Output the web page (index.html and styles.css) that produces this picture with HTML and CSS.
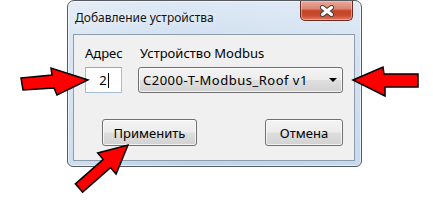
FILE: index.html
```html
<!DOCTYPE html>
<html lang="ru">
<head>
<meta charset="utf-8">
<title>Добавление устройства</title>
<link rel="stylesheet" href="styles.css">
</head>
<body>
<div class="stage">
  <div class="window">
    <div class="titlebar">
      <span class="title">Добавление устройства</span>
      <div class="close" aria-label="Закрыть">
        <svg width="16" height="12" viewBox="0 0 16 12">
          <path d="M3.5 2.5 L12.5 9.5 M12.5 2.5 L3.5 9.5" stroke="#3a3a3a" stroke-width="5" stroke-linecap="round"/>
          <path d="M3.5 2.5 L12.5 9.5 M12.5 2.5 L3.5 9.5" stroke="#ffffff" stroke-width="3.2" stroke-linecap="round"/>
        </svg>
      </div>
    </div>
    <div class="client">
      <div class="fields">
        <div class="label">Адрес</div>
        <div class="label label-combo">Устройство Modbus</div>
        <div class="textbox"><span>2</span><span class="caret"></span></div>
        <div class="combo"><span class="combo-text">C2000-T-Modbus_Roof v1</span><span class="combo-arrow"></span></div>
      </div>
      <div class="actions">
        <div class="btn btn-apply">Применить</div>
        <div class="btn btn-cancel">Отмена</div>
      </div>
    </div>
  </div>
  <svg class="arrows" width="433" height="204" viewBox="0 0 433 204">
    <polygon points="21,78 52,75 51,68 88,80 57,95 54,88 23,90" fill="#ff0000" stroke="#000" stroke-width="1.5" stroke-linejoin="miter"/>
    <polygon points="353,80 383,67 384,74 418,74 418,87 385,87 385,96" fill="#ff0000" stroke="#000" stroke-width="1.5" stroke-linejoin="miter"/>
    <polygon points="128,145 116.1,174.1 110.5,167.6 82.6,192.1 75.4,183.9 103.3,159.4 97.7,153" fill="#ff0000" stroke="#000" stroke-width="1.5" stroke-linejoin="miter"/>
  </svg>
</div>
</body>
</html>
```

FILE: styles.css
```css
* { box-sizing: border-box; }
html, body { margin: 0; padding: 0; background: #ffffff; }
body { font-family: "Noto Sans", "Open Sans", "DejaVu Sans", sans-serif; font-size: 13px; color: #000; }

.stage {
  position: relative;
  width: 433px;
  height: 204px;
  overflow: hidden;
  background: #ffffff;
}

.window {
  margin-left: 67px;
  width: 295px;
  height: 167px;
  border: 1px solid #565a60;
  border-radius: 7px 7px 6px 6px;
  background:
    linear-gradient(90deg, rgba(255,255,255,0.25) 0%, rgba(255,255,255,0) 40%, rgba(255,255,255,0.15) 100%),
    linear-gradient(180deg, #dde8f4 0%, #cfdff0 25%, #c4d8ed 70%, #bcd3ea 100%);
  box-shadow: inset 0 0 0 1px rgba(255,255,255,0.55);
  display: flex;
  flex-direction: column;
}

.titlebar {
  height: 33px;
  display: flex;
  align-items: flex-start;
  justify-content: space-between;
  padding-left: 7px;
}

.title {
  font-size: 12px;
  line-height: 18px;
  margin-top: 8px;
  color: #111;
  text-shadow: 0 0 6px rgba(255,255,255,0.9);
}

.close {
  width: 53px;
  height: 20px;
  margin-right: 8px;
  border: 1px solid #6b2b22;
  border-top: none;
  border-radius: 0 0 5px 5px;
  background: linear-gradient(180deg, #e9a89c 0%, #dc8672 40%, #c44428 52%, #c9492f 75%, #de7a5f 100%);
  box-shadow: inset 0 0 0 1px rgba(255,220,210,0.45);
  display: flex;
  align-items: center;
  justify-content: center;
}

.client {
  margin: 0 6px 0 5px;
  height: 127px;
  border: 1px solid #8f9cab;
  background: #f0f0f0;
  padding: 9px 11px 0 11px;
  display: flex;
  flex-direction: column;
}

.fields {
  display: grid;
  grid-template-columns: 37px 205px;
  grid-template-rows: 18px 26px;
  column-gap: 16px;
  row-gap: 5px;
}

.label { line-height: 18px; white-space: nowrap; }
.label-combo { padding-left: 2px; }

.textbox {
  background: #ffffff;
  border: 1px solid #a7bdd5;
  border-top-color: #8ea8c6;
  display: flex;
  align-items: center;
  justify-content: center;
  padding-left: 1px;
  line-height: 16px;
}

.caret {
  display: inline-block;
  width: 1px;
  height: 15px;
  background: #000;
  margin-left: 1px;
}

.combo, .btn {
  border: 1px solid #707070;
  border-radius: 3px;
  background: linear-gradient(180deg, #f4f4f4 0%, #ececec 48%, #dedede 52%, #d2d2d2 100%);
  box-shadow: inset 0 0 0 1px rgba(255,255,255,0.75);
}

.combo {
  display: flex;
  align-items: center;
  justify-content: space-between;
  padding: 0 5px 0 4px;
}

.combo-text { white-space: nowrap; line-height: 16px; letter-spacing: 0.5px; }

.combo-arrow {
  width: 0;
  height: 0;
  border-left: 4px solid transparent;
  border-right: 4px solid transparent;
  border-top: 4px solid #000;
}

.actions {
  display: flex;
  justify-content: space-between;
  padding-left: 17px;
  margin-top: 26px;
}

.btn {
  height: 27px;
  display: flex;
  align-items: center;
  justify-content: center;
  line-height: 16px;
  white-space: nowrap;
}
.btn-apply { width: 95px; }
.btn-cancel { width: 78px; }

.arrows {
  position: absolute;
  left: 0;
  top: 0;
  pointer-events: none;
}
```
